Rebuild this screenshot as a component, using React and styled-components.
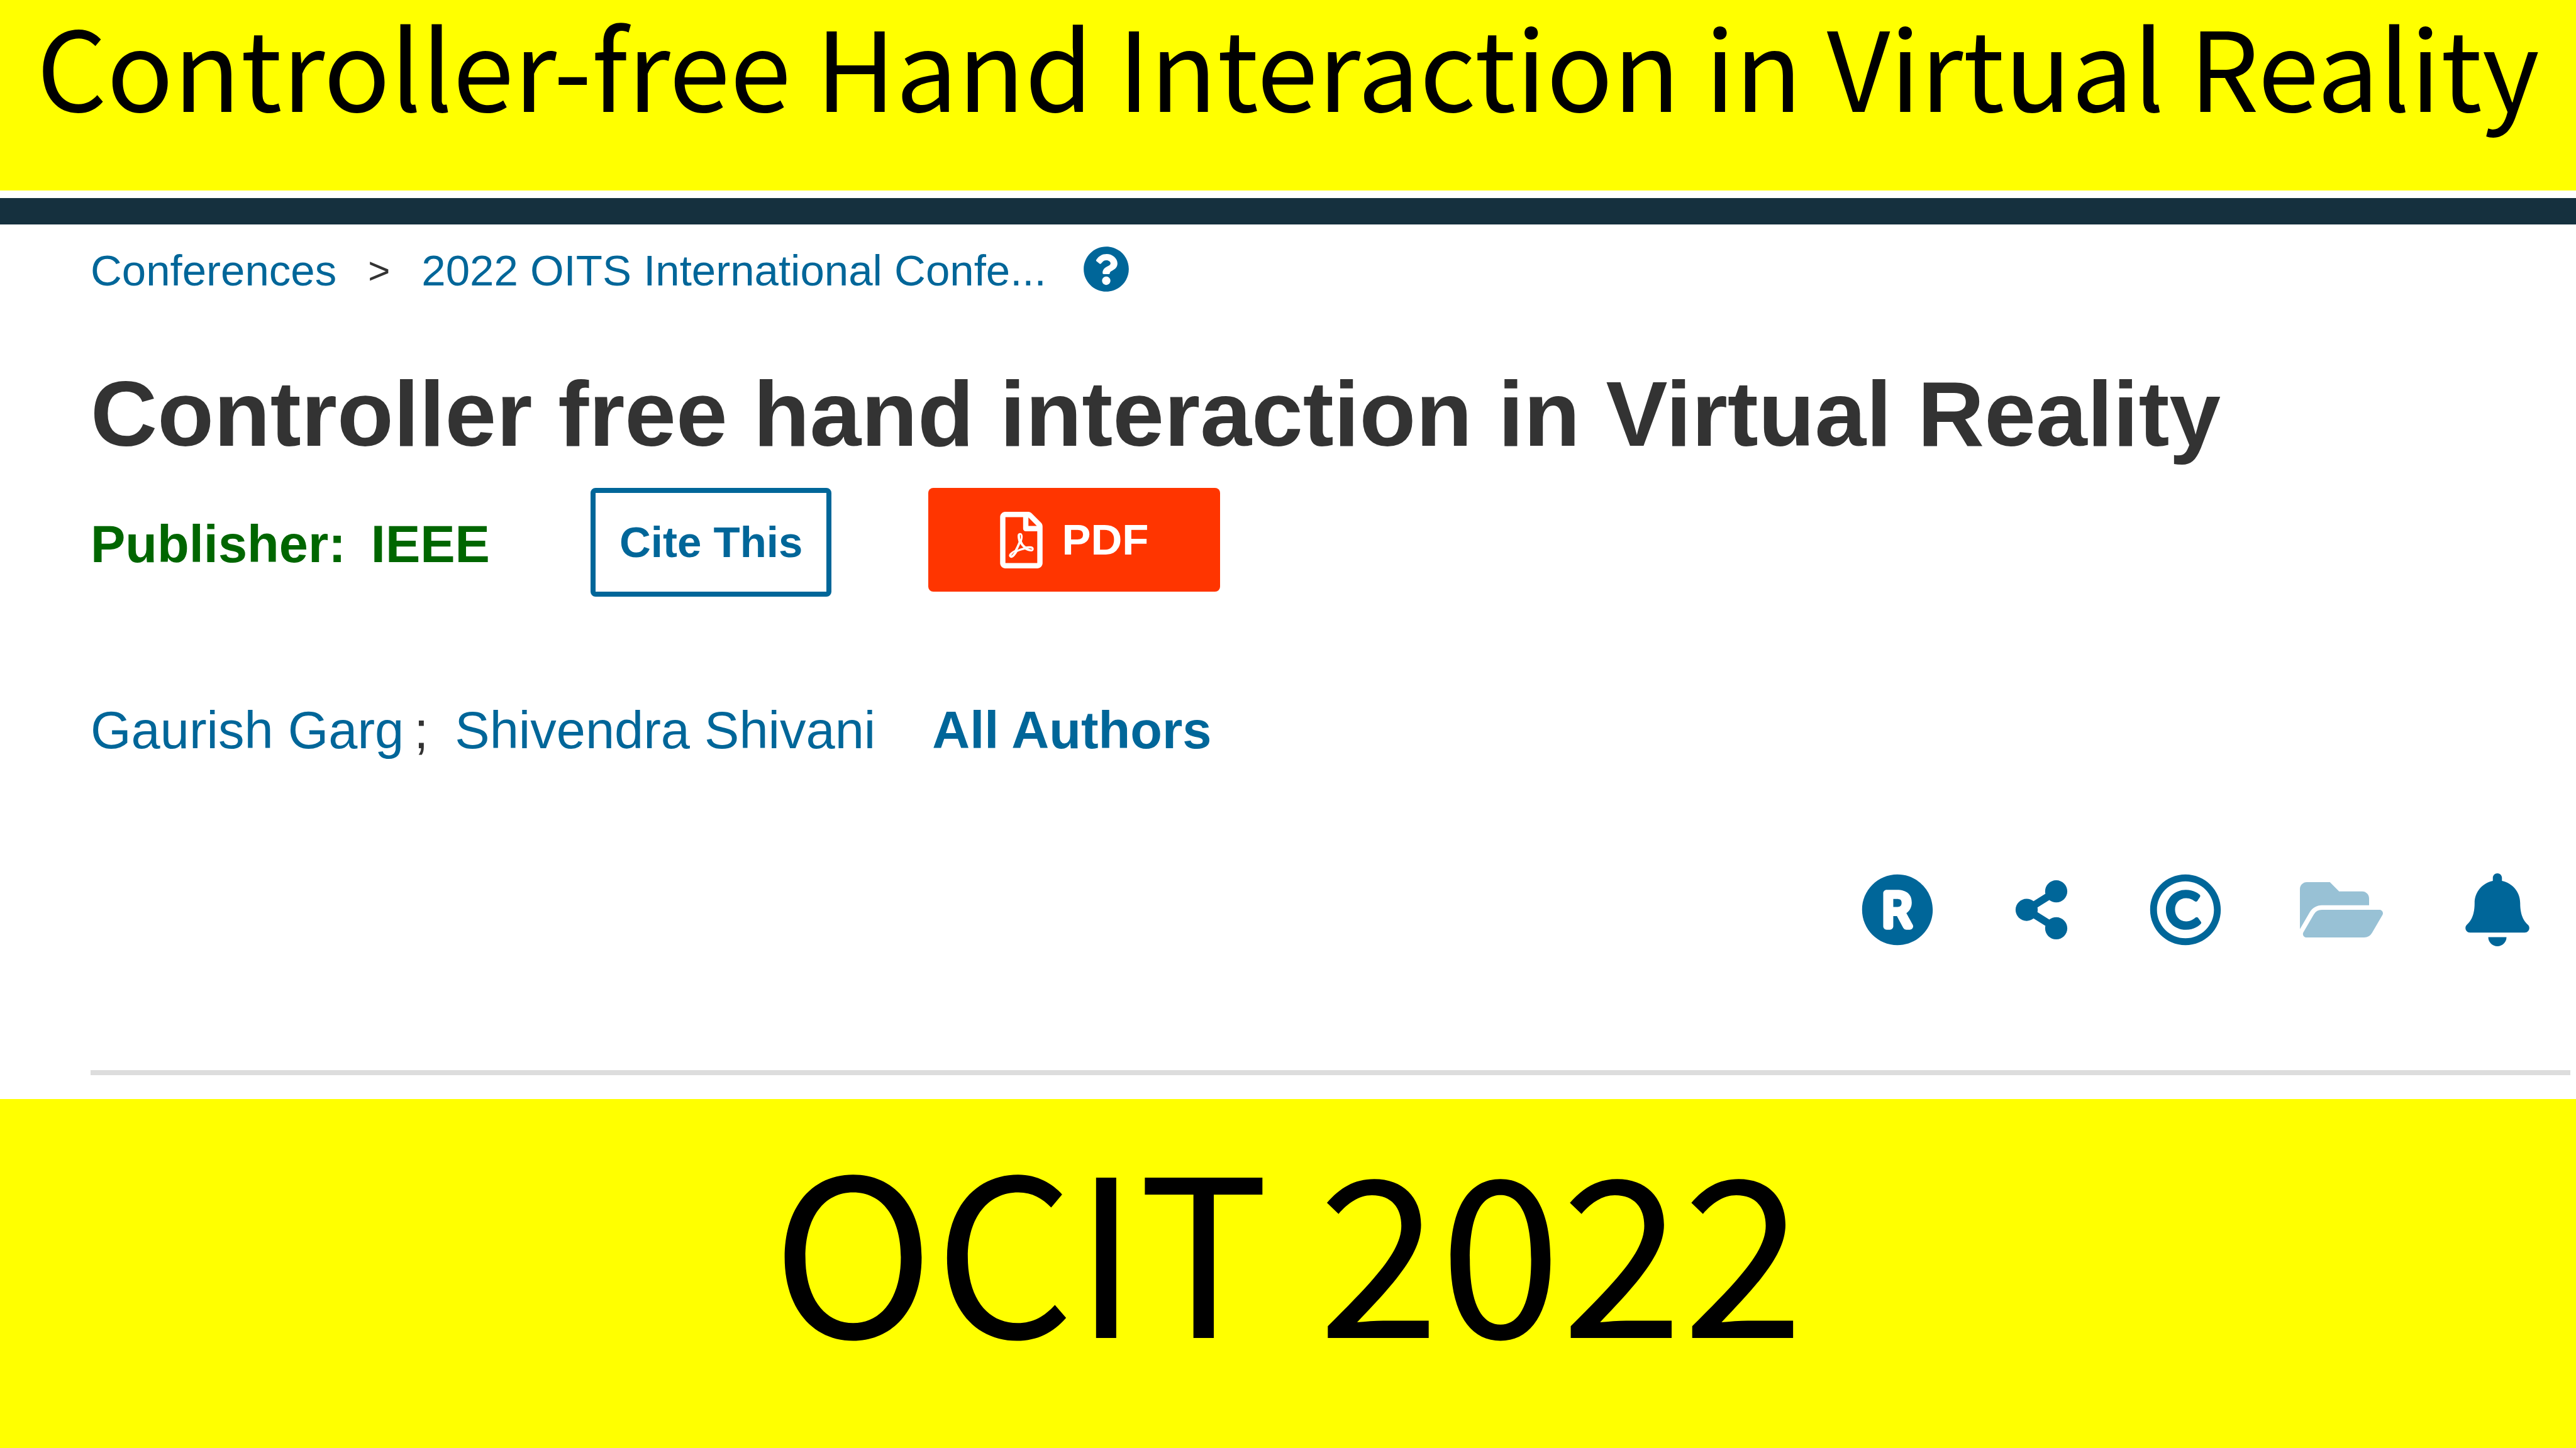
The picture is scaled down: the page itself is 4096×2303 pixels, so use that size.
import React from "react";
import styled, { createGlobalStyle } from "styled-components";
import {
  FaBell,
  FaFolderOpen,
  FaQuestionCircle,
  FaRegCopyright,
  FaRegFilePdf,
  FaRegistered,
  FaShareAlt,
} from "react-icons/fa";

const GlobalStyle = createGlobalStyle`
  *, *::before, *::after { box-sizing: border-box; }
  body { margin: 0; background: #fff; }
  h1, h2, p { margin: 0; }
`;

const blue = "#006699";

const Page = styled.div`
  display: flex;
  flex-direction: column;
  min-height: 100vh;
  font-family: "Liberation Sans", Arial, sans-serif;
`;

const Banner = styled.header`
  background: #ffff00;
  color: #000;
  font-family: "Noto Sans CJK SC", "Noto Sans", sans-serif;
  text-align: center;
  white-space: nowrap;
`;

const TopBanner = styled(Banner)`
  padding-bottom: 99px;
  font-size: 175px;
  line-height: 204px;
`;

const BottomBanner = styled(Banner)`
  flex: 1;
  font-size: 348px;
  line-height: 456px;
`;

const BannerText = styled.p`
  font-weight: 400;
`;

const NavStrip = styled.div`
  height: 42px;
  margin-top: 12px;
  background: #15303e;
`;

const Paper = styled.main`
  padding: 34px 9px 38px 144px;
`;

const TextLink = styled.a`
  color: ${blue};
  font-weight: ${(p) => (p.$bold ? 700 : 400)};
  text-decoration: none;
`;

const Breadcrumb = styled.nav`
  display: flex;
  align-items: flex-start;
  font-size: 69px;
  line-height: 80px;
`;

const Chevron = styled.span`
  padding: 0 50px;
  color: #333;
  font-size: 60px;
`;

const IconButton = styled.button`
  display: flex;
  padding: 0;
  border: 0;
  background: none;
  color: ${blue};
  font-size: ${(p) => p.$size}px;
  opacity: ${(p) => (p.disabled ? 0.4 : 1)};
`;

const HelpButton = styled(IconButton)`
  margin-left: 58px;
`;

const Title = styled.h1`
  margin-top: 103px;
  color: #333;
  font-size: 147px;
  font-weight: 700;
  line-height: 168px;
  white-space: nowrap;
`;

const Actions = styled.div`
  display: flex;
  align-items: flex-start;
  margin-top: 34px;
`;

const Publisher = styled.p`
  display: flex;
  gap: 40px;
  color: #006600;
  font-size: 83px;
  font-weight: 700;
  line-height: 180px;
`;

const ActionButton = styled.button`
  display: flex;
  align-items: center;
  justify-content: center;
  border-radius: 8px;
  font-family: inherit;
  font-size: 69px;
  font-weight: 700;
  line-height: 80px;
`;

const CiteButton = styled(ActionButton)`
  height: 173px;
  margin-left: 160px;
  padding: 0 38px;
  border: 8px solid ${blue};
  background: #fff;
  color: ${blue};
`;

const PdfButton = styled(ActionButton)`
  gap: 30px;
  height: 165px;
  margin-left: 154px;
  padding: 0 114px;
  border: 0;
  background: #ff3500;
  color: #fff;

  svg {
    width: 68px;
    height: 90px;
  }
`;

const Authors = styled.div`
  display: flex;
  margin-top: 156px;
  color: #333;
  font-size: 83px;
  line-height: 100px;
`;

const Separator = styled.span`
  padding: 0 42px 0 16px;
`;

const AllAuthors = styled(TextLink)`
  margin-left: 90px;
`;

const Tools = styled.div`
  display: flex;
  align-items: center;
  justify-content: flex-end;
  gap: 124px;
  height: 116px;
  margin-top: 177px;
  padding-right: 58px;
`;

const Divider = styled.hr`
  height: 8px;
  margin: 197px 0 0;
  border: 0;
  background: #ddd;
`;

export default function App() {
  return (
    <Page>
      <GlobalStyle />
      <TopBanner>
        <BannerText>Controller-free Hand Interaction in Virtual Reality</BannerText>
      </TopBanner>
      <NavStrip />
      <Paper>
        <Breadcrumb aria-label="Breadcrumb">
          <TextLink href="#conferences">Conferences</TextLink>
          <Chevron>&gt;</Chevron>
          <TextLink href="#proceedings">2022 OITS International Confe...</TextLink>
          <HelpButton $size={74} aria-label="Help">
            <FaQuestionCircle />
          </HelpButton>
        </Breadcrumb>
        <Title>Controller free hand interaction in Virtual Reality</Title>
        <Actions>
          <Publisher>
            <span>Publisher:</span>
            <span>IEEE</span>
          </Publisher>
          <CiteButton>Cite This</CiteButton>
          <PdfButton>
            <FaRegFilePdf />
            PDF
          </PdfButton>
        </Actions>
        <Authors>
          <TextLink href="#garg">Gaurish Garg</TextLink>
          <Separator>;</Separator>
          <TextLink href="#shivani">Shivendra Shivani</TextLink>
          <AllAuthors href="#authors" $bold>
            All Authors
          </AllAuthors>
        </Authors>
        <Tools>
          <IconButton $size={116} aria-label="References">
            <FaRegistered />
          </IconButton>
          <IconButton $size={94} aria-label="Share">
            <FaShareAlt />
          </IconButton>
          <IconButton $size={116} aria-label="Copyright">
            <FaRegCopyright />
          </IconButton>
          <IconButton $size={132} aria-label="Save to folder" disabled>
            <FaFolderOpen />
          </IconButton>
          <IconButton $size={116} aria-label="Alerts">
            <FaBell />
          </IconButton>
        </Tools>
        <Divider />
      </Paper>
      <BottomBanner as="footer">
        <BannerText>OCIT 2022</BannerText>
      </BottomBanner>
    </Page>
  );
}
